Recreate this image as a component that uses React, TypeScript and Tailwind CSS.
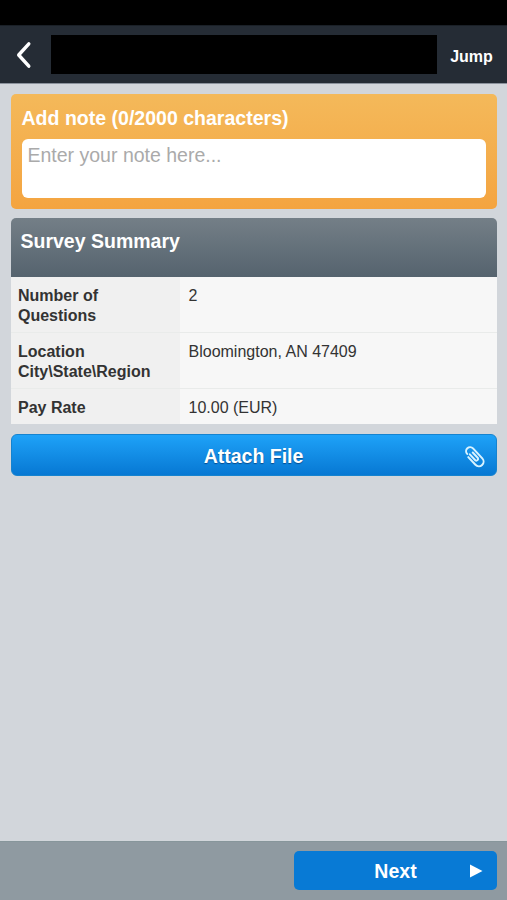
const SUMMARY_ROWS = [
  { label: "Number of Questions", value: "2", height: "h-14" },
  { label: "Location City\\State\\Region", value: "Bloomington, AN 47409", height: "h-14" },
  { label: "Pay Rate", value: "10.00 (EUR)", height: "h-[35px]" },
];

function Header() {
  return (
    <header className="shrink-0">
      {/* Status bar */}
      <div className="h-[25px] bg-black"></div>

      <div className="h-[59px] flex items-center bg-[#252c35] border-t border-t-[#1a2027] border-b border-b-[#8b929c]">
        <button type="button" aria-label="Back" className="w-[51px] h-full shrink-0 flex items-center pl-4">
          <svg width="16" height="28" viewBox="0 0 16 28" fill="none" stroke="white" strokeWidth="3.4" strokeLinecap="round" strokeLinejoin="round">
            <path d="M12.8 2.8 L2.7 14 L12.8 25.2" />
          </svg>
        </button>
        <div className="w-[386px] h-[39px] bg-black"></div>
        <button type="button" className="flex-1 pt-[5px] pr-px text-[16px] font-bold text-white">
          Jump
        </button>
      </div>
    </header>
  );
}

function NoteCard() {
  return (
    <section className="h-[115px] px-[11px] pt-3 rounded-[5px] bg-linear-to-b from-[#f4b95a] to-[#f4a440]">
      <h2 className="h-[33px] leading-6 text-[19.55px] font-bold text-white">
        Add note (0/2000 characters)
      </h2>
      <textarea
        placeholder="Enter your note here..."
        className="block w-full h-[59px] px-1.5 py-1 resize-none rounded-[6px] bg-white text-[19.5px] leading-[24px] text-[#333] placeholder:text-[#aaaaaa] outline-none"
      />
    </section>
  );
}

function SurveySummary() {
  return (
    <section className="mt-[9px]">
      <div className="h-[59px] px-[10px] pt-[11px] rounded-t-[5px] bg-linear-to-b from-[#747f87] to-[#55636e]">
        <h2 className="text-[19.5px] leading-6 font-bold text-white">Survey Summary</h2>
      </div>
      <dl className="h-[147px] flex flex-col bg-[#f7f7f7]">
        {SUMMARY_ROWS.map((row) => (
          <div
            key={row.label}
            className={`${row.height} flex text-[16px] leading-[19.5px] text-[#333] border-b border-[#e9ebea] last:border-b-0`}
          >
            <dt className="w-[169px] shrink-0 pl-[7.5px] pr-5 pt-[9px] font-bold bg-[#f0f0f0]">
              {row.label}
            </dt>
            <dd className="flex-1 pl-[9px] pt-[9px]">{row.value}</dd>
          </div>
        ))}
      </dl>
    </section>
  );
}

export default function App() {
  return (
    <div className="h-screen flex flex-col overflow-hidden bg-[#d2d6db] font-['Liberation_Sans',Arial,sans-serif]">
      <Header />

      <main className="flex-1 px-[10.5px] pt-[10px]">
        <NoteCard />
        <SurveySummary />

        <button
          type="button"
          className="relative mt-[10px] pt-[3px] w-full h-[42px] rounded-[6px] border border-[#1583cf] bg-linear-to-b from-[#1ea2f8] to-[#0778d3] text-[19.5px] font-bold text-white text-shadow-[0_1px_1px_rgba(0,40,90,0.6)]"
        >
          Attach File
          <svg
            className="absolute right-[9px] top-[10px]"
            width="24"
            height="24"
            viewBox="0 0 24 24"
            fill="none"
            stroke="#d9f3ff"
            strokeWidth="2"
            strokeLinecap="round"
          >
            <g transform="rotate(-43 12 12)">
              <path d="M7 7.5 V18 A4.7 4.7 0 0 0 16.4 18 V4.4 A4 4 0 0 0 8.4 4.4 M10 6.5 V14.8 A1.8 1.8 0 0 0 13.4 14.8 V7.2" />
            </g>
          </svg>
        </button>
      </main>

      <footer className="h-[59px] shrink-0 flex justify-end pt-[9px] pr-[10px] bg-[#8f9aa1] border-t border-[#87969b]">
        <button
          type="button"
          className="relative w-[203px] h-[39px] pt-0.5 rounded-[5px] bg-[#087ad5] text-[19.5px] font-bold text-white"
        >
          Next
          <svg className="absolute right-[14px] top-[13px]" width="14" height="14" viewBox="0 0 14 14" fill="white">
            <path d="M1 0.5 L13.5 7 L1 13.5 Z" />
          </svg>
        </button>
      </footer>
    </div>
  );
}
